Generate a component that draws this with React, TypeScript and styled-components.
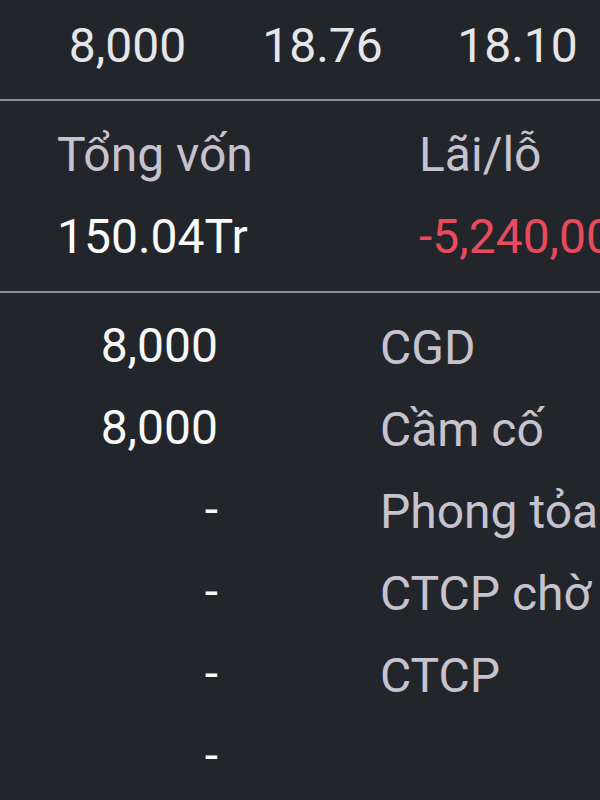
import styled, { createGlobalStyle } from "styled-components";

const GlobalStyle = createGlobalStyle`
  html, body {
    margin: 0;
    padding: 0;
    background: #22262b;
  }
`;

const Screen = styled.div`
  width: 600px;
  height: 800px;
  overflow: hidden;
  background: #22262b;
  font-family: Roboto, "Noto Sans", Arial, sans-serif;
  font-size: 48px;
  line-height: 56px;
  white-space: nowrap;
`;

const PriceRow = styled.div`
  display: flex;
  box-sizing: border-box;
  height: 101px;
  padding: 18px 0 0 30px;
  border-bottom: 2px solid #8e9094;
`;

const PriceCell = styled.div`
  flex: 0 0 195px;
  text-align: center;
  color: #e6e6e9;
`;

const Summary = styled.div`
  display: grid;
  grid-template-columns: 362px auto;
  row-gap: 26px;
  padding: 26px 0 26px 57px;
  border-bottom: 2px solid #8e9094;
`;

const SummaryLabel = styled.div`
  color: #c6c2ce;
`;

const SummaryValue = styled.div<{ $negative?: boolean }>`
  color: ${(p) => (p.$negative ? "#ea4a5e" : "#fafafa")};
`;

const Holdings = styled.div`
  padding-top: 12px;
`;

const HoldRow = styled.div`
  display: grid;
  grid-template-columns: 218px auto;
  column-gap: 162px;
  align-items: center;
  height: 82px;
`;

const Amount = styled.div`
  text-align: right;
  color: #f7f7f7;
`;

const Kind = styled.div`
  margin-top: 4px;
  color: #c6c2ce;
`;

const prices = ["8,000", "18.76", "18.10"];

const holdings = [
  { amount: "8,000", kind: "CGD" },
  { amount: "8,000", kind: "Cầm cố" },
  { amount: "-", kind: "Phong tỏa" },
  { amount: "-", kind: "CTCP chờ về" },
  { amount: "-", kind: "CTCP" },
  { amount: "-", kind: "" },
];

const App: React.FC = () => {
  const rows = holdings.map((item, i) => (
    <HoldRow key={i}>
      <Amount>{item.amount}</Amount>
      <Kind>{item.kind}</Kind>
    </HoldRow>
  ));

  return (
    <Screen>
      <GlobalStyle />
      <PriceRow>
        {prices.map((p) => (
          <PriceCell key={p}>{p}</PriceCell>
        ))}
      </PriceRow>
      <Summary>
        <SummaryLabel>Tổng vốn</SummaryLabel>
        <SummaryLabel>Lãi/lỗ</SummaryLabel>
        <SummaryValue>150.04Tr</SummaryValue>
        <SummaryValue $negative>-5,240,000</SummaryValue>
      </Summary>
      <Holdings>{rows}</Holdings>
    </Screen>
  );
};

export default App;
